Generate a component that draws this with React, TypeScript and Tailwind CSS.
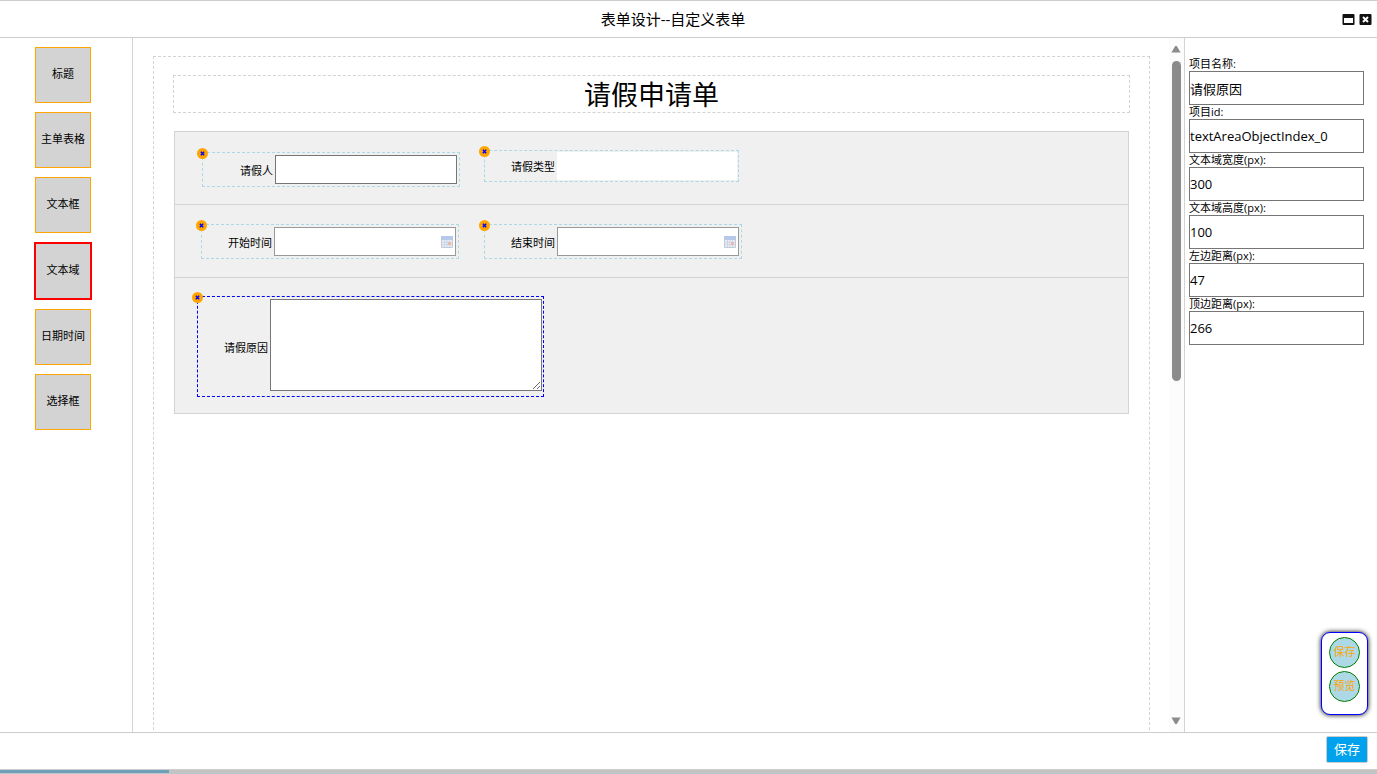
import clsx from 'clsx'
import React from 'react'

type FieldKind = 'text' | 'select' | 'date' | 'textarea'

type Field = {
  id: string
  label: string
  kind: FieldKind
  left: number
  top: number
  active?: boolean
}

const tools = ['标题', '主单表格', '文本框', '文本域', '日期时间', '选择框']

// left / top are measured from the inside of the canvas border
const fields: Field[] = [
  { id: 'textObjectIndex_0', label: '请假人', kind: 'text', left: 48, top: 95 },
  { id: 'selectObjectIndex_0', label: '请假类型', kind: 'select', left: 330, top: 93 },
  { id: 'dateObjectIndex_0', label: '开始时间', kind: 'date', left: 47, top: 167 },
  { id: 'dateObjectIndex_1', label: '结束时间', kind: 'date', left: 330, top: 167 },
  { id: 'textAreaObjectIndex_0', label: '请假原因', kind: 'textarea', left: 43, top: 239, active: true },
]

const properties = [
  { id: 'name', label: '项目名称:', value: '请假原因' },
  { id: 'id', label: '项目id:', value: 'textAreaObjectIndex_0' },
  { id: 'width', label: '文本域宽度(px):', value: '300' },
  { id: 'height', label: '文本域高度(px):', value: '100' },
  { id: 'left', label: '左边距离(px):', value: '47' },
  { id: 'top', label: '顶边距离(px):', value: '266' },
]

const App = () => {
  return (
    <div className="relative flex h-screen flex-col overflow-hidden border-t border-[#ccc] bg-white font-['Open_Sans','Noto_Sans_CJK_SC',sans-serif] text-[11px] text-black">
      {/* header */}
      <header className="flex h-[37px] shrink-0 items-center border-b border-[#ccc] pr-[5px] pl-1">
        <h1 className="flex-1 text-center text-[15px]">表单设计--自定义表单</h1>
        <div className="flex gap-1">
          <button type="button" aria-label="最大化"><MaximizeIcon /></button>
          <button type="button" aria-label="关闭"><CloseIcon /></button>
        </div>
      </header>

      <div className="flex min-h-0 flex-1">
        {/* tools */}
        <aside className="flex w-[133px] shrink-0 flex-col items-center gap-[9px] border-r border-[#d3d3d3] pt-[9px] pr-[6px]">
          {tools.map((tool) => <ToolButton key={tool} name={tool} selected={tool === '文本域'} />)}
        </aside>

        {/* canvas */}
        <main className="flex min-w-0 flex-1">
          <div className="min-w-0 flex-1 overflow-hidden pt-[18px] pr-[19px] pl-5">
            <div className="relative h-[1200px] border border-dashed border-[#d3d3d3] px-[19px] pt-[18px]">
              <h2 className="border border-dashed border-[#d3d3d3] pt-[2px] text-center text-[27px] leading-[34px]">请假申请单</h2>
              <div className="mx-px mt-[18px] divide-y divide-[#d3d3d3] border border-[#d3d3d3] bg-[#f0f0f0]">
                <div className="h-[73px]" />
                <div className="h-[73px]" />
                <div className="h-[135px]" />
              </div>
              {fields.map((field) => <FieldItem key={field.id} field={field} />)}
            </div>
          </div>
          <Scrollbar />
        </main>

        {/* properties */}
        <aside className="w-[193px] shrink-0 border-l border-[#d3d3d3] pt-[19px] pr-[13px] pl-1">
          {properties.map((item) => (
            <div key={item.id}>
              <label htmlFor={item.id} className="block leading-[14px]">{item.label}</label>
              <input
                id={item.id}
                defaultValue={item.value}
                className="block h-[34px] w-full border border-[#767676] text-[13px] outline-none"
              />
            </div>
          ))}
        </aside>
      </div>

      {/* footer */}
      <footer className="flex h-[37px] shrink-0 items-start justify-end border-t border-[#ccc] pt-[3px] pr-[9px]">
        <button type="button" className="h-[27px] w-[42px] rounded-xs border border-[#ccc] bg-[#00a2ed] text-[13px] text-white">保存</button>
      </footer>
      <div className="h-[5px] shrink-0 border-y border-t-[#ccc] border-b-[#b8c8cc] bg-[#c4c4c4]">
        <div className="h-full w-[169px] bg-[#6f9fb9]" />
      </div>

      {/* floating actions */}
      <div className="absolute right-[9px] bottom-[59px] flex h-[83px] w-[47px] flex-col items-center gap-[3px] rounded-[9px] border border-[blue] bg-white pt-1 shadow-[0_0_5px_#000]">
        <RoundButton>保存</RoundButton>
        <RoundButton>预览</RoundButton>
      </div>
    </div>
  )
}

export default App

const ToolButton = ({ name, selected }: { name: string; selected: boolean }) => (
  <button
    type="button"
    className={clsx(
      'shrink-0 bg-[#d3d3d3] pb-[2px]',
      selected ? 'size-[58px] border-2 border-[red]' : 'size-14 border border-[orange]'
    )}
  >
    {name}
  </button>
)

const RoundButton = ({ children }: { children: React.ReactNode }) => (
  <button type="button" className="size-[31px] rounded-full border border-[green] bg-[lightblue] text-[orange]">
    {children}
  </button>
)

const FieldItem = ({ field }: { field: Field }) => {
  const { id, label, kind, left, top, active } = field
  return (
    <div
      className={clsx(
        'absolute flex items-start border border-dashed',
        active ? 'border-[blue]' : 'border-[lightblue]',
        kind === 'textarea' && 'h-[101px] pt-[2px] pr-px',
        kind === 'select' && 'h-8 pt-px pr-px',
        (kind === 'text' || kind === 'date') && 'h-[35px] pt-[2px] pr-[2px]'
      )}
      style={{ left, top }}
    >
      <button type="button" aria-label="删除" className="absolute -top-[5px] -left-[6px] flex size-[11px] items-center justify-center rounded-full bg-[orange]">
        <svg viewBox="0 0 5 5" className="size-[5px]" stroke="blue" strokeWidth="1.4">
          <path d="M.8 .8L4.2 4.2M4.2 .8L.8 4.2" />
        </svg>
      </button>
      <label htmlFor={id} className="w-[72px] self-center pt-[2px] pr-[2px] text-right">{label}</label>
      {kind === 'text' && <input id={id} className="h-[29px] w-[182px] border border-[#767676] bg-white" />}
      {kind === 'select' && <select id={id} className="h-7 w-[180px] appearance-none bg-white" />}
      {kind === 'date' && (
        <div className="relative">
          <input id={id} className="block h-[29px] w-[182px] border border-[#999] bg-white" />
          <CalendarIcon />
        </div>
      )}
      {kind === 'textarea' && <textarea id={id} className="h-[92px] w-[272px] border border-[#767676] bg-white" />}
    </div>
  )
}

const Scrollbar = () => (
  <div className="flex w-[15px] shrink-0 flex-col items-center bg-[#fcfcfc] py-[7px] pr-px">
    <svg viewBox="0 0 10 8" className="h-2 w-[10px]" fill="#8b8b8b"><path d="M4.2 1h1.6L9.6 7.6H.4z" /></svg>
    <div className="mt-2 h-80 w-[9px] rounded-full bg-[#8b8b8b]" />
    <svg viewBox="0 0 10 8" className="mt-auto h-2 w-[10px]" fill="#8b8b8b"><path d="M4.2 7h1.6L9.6.4H.4z" /></svg>
  </div>
)

const MaximizeIcon = () => (
  <svg viewBox="0 0 13 11" className="h-[11px] w-[13px]">
    <rect x="0.5" width="12" height="11" rx="1" fill="#111" />
    <rect x="2" y="4" width="9" height="5" fill="#fff" />
  </svg>
)

const CloseIcon = () => (
  <svg viewBox="0 0 13 11" className="h-[11px] w-[13px]">
    <rect x="0.5" width="12" height="11" rx="1" fill="#111" />
    <path d="M4 3l5 5M9 3L4 8" stroke="#fff" strokeWidth="2" />
  </svg>
)

const CalendarIcon = () => (
  <svg viewBox="0 0 12 12" className="pointer-events-none absolute top-[9px] right-[3px] size-3">
    <rect width="12" height="12" rx="1" fill="#c3cad6" />
    <rect width="12" height="3.5" rx="1" fill="#b4c8ec" />
    <path d="M1 4h10v7H1z" fill="#e9eef6" />
    <path d="M1 6.3h10M1 8.7h10M3.5 4v7M6 4v7M8.5 4v7" stroke="#bccadf" strokeWidth=".6" />
    <rect x="7" y="6" width="3" height="3" fill="#efb9a8" />
  </svg>
)
